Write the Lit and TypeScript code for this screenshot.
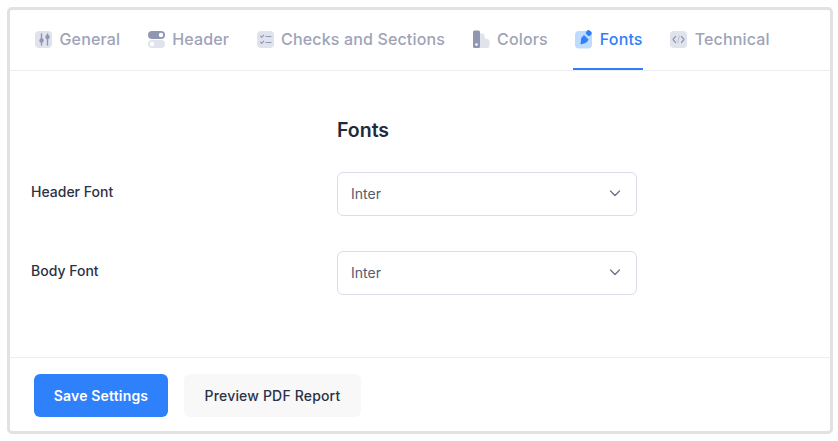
import { LitElement, html, css, svg } from "lit";
import { customElement } from "lit/decorators.js";

const G = "#9097b3";
const L = "#e1e3ec";
const icons: Record<string, unknown> = {
  general: svg`<rect x="2" y="2" width="17" height="17" rx="4" fill="${L}"/>
    <path d="M8.5 5v11M14.5 5v11" stroke="${G}" stroke-width="1.4" stroke-linecap="round"/>
    <circle cx="8.5" cy="11.5" r="2.2" fill="${G}"/><circle cx="14.5" cy="8" r="2.2" fill="${G}"/>`,
  header: svg`<rect x="2" y="2" width="17" height="8" rx="4" fill="${G}"/><circle cx="15" cy="6" r="2.2" fill="#fff"/>
    <rect x="2" y="11" width="17" height="8" rx="4" fill="${L}"/><circle cx="6" cy="15" r="2.2" fill="#fff"/>`,
  checks: svg`<rect x="2" y="2" width="17" height="17" rx="4" fill="${L}"/>
    <path d="M5.5 7.2l1.2 1.2 2-2.2M5.5 13.2l1.2 1.2 2-2.2M11 7.5h5M11 13.5h5" stroke="${G}" stroke-width="1.2" fill="none" stroke-linecap="round" stroke-linejoin="round"/>`,
  colors: svg`<path d="M8 4.5h3.5a2 2 0 0 1 2 2v1a2.5 2.5 0 0 0 2.5 2.5a2.5 2.5 0 0 1 2.5 2.5v4a2.5 2.5 0 0 1-2.5 2.5H8z" fill="${L}"/>
    <rect x="2" y="1.5" width="7" height="17.5" rx="1.5" fill="${G}"/><circle cx="5.5" cy="15.5" r="1.3" fill="#fff"/>`,
  fonts: svg`<rect x="2" y="2" width="17" height="17.5" rx="4" fill="#bfdbfe"/>
    <path d="M11 6.5L15 10.5L13.5 13L8 15L8.8 9z" fill="#2f80fb" stroke="#2f80fb" stroke-width="1" stroke-linejoin="round"/>
    <rect x="13" y="1.5" width="5.6" height="5" rx="1.8" transform="rotate(42 15.8 4)" fill="#2f80fb"/>`,
  technical: svg`<rect x="2" y="2" width="17" height="17" rx="4" fill="${L}"/>
    <path d="M7.5 7.5l-2.5 3 2.5 3M13.5 7.5l2.5 3-2.5 3" stroke="${G}" stroke-width="1.2" fill="none" stroke-linecap="round" stroke-linejoin="round"/>
    <path d="M11.4 7l-1.8 7" stroke="#c3c7d6" stroke-width="1.1" stroke-linecap="round"/>`,
};

const tabs = [
  ["general", "General"],
  ["header", "Header"],
  ["checks", "Checks and Sections"],
  ["colors", "Colors"],
  ["fonts", "Fonts"],
  ["technical", "Technical"],
];

@customElement("app-root")
export class AppRoot extends LitElement {
  static styles = css`
    :host {
      display: block;
      padding: 7px 5px 7px 7px;
      background: #fff;
      font-family: Inter, "Liberation Sans", sans-serif;
    }
    .card {
      height: 427px;
      box-sizing: border-box;
      border: 3px solid #e2e2e2;
      border-radius: 5px;
      background: #fff;
      display: flex;
      flex-direction: column;
    }
    .tabs {
      display: flex;
      gap: 25.5px;
      height: 61px;
      box-sizing: border-box;
      padding-left: 23px;
      border-bottom: 1px solid #ececf1;
    }
    .tab {
      display: flex;
      align-items: center;
      gap: 6.5px;
      height: 60px;
      box-sizing: border-box;
      font-size: 16px;
      letter-spacing: 0.15px;
      font-weight: 500;
      color: #9ea3b8;
      border-bottom: 2px solid transparent;
    }
    .tab.active {
      color: #2f80fb;
      border-bottom-color: #2f80fb;
    }
    .tab svg {
      width: 20px;
      height: 21px;
      flex: none;
      overflow: visible;
    }
    .main {
      flex: 1;
      padding: 46px 21px 0;
    }
    .grid {
      display: grid;
      grid-template-columns: 306px 300px;
      row-gap: 35px;
    }
    h2 {
      grid-column: 2;
      margin: 0 0 -6px;
      font-size: 19.5px;
      line-height: 26px;
      font-weight: 600;
      color: #1f2a3d;
    }
    label {
      font-size: 14px;
      font-weight: 500;
      color: #2b3245;
      line-height: 40px;
    }
    .select {
      height: 44px;
      box-sizing: border-box;
      border: 1px solid #d9dde8;
      border-radius: 6px;
      display: flex;
      align-items: center;
      justify-content: space-between;
      padding: 0 14px 2px 13px;
      font-size: 14px;
      color: #545b70;
    }
    .select svg {
      width: 14px;
      height: 14px;
    }
    .footer {
      height: 74px;
      box-sizing: border-box;
      border-top: 1px solid #ececf1;
      padding: 16px 24px 0;
      display: flex;
      gap: 16px;
      align-items: flex-start;
    }
    button {
      height: 43px;
      border: none;
      border-radius: 6px;
      font-family: inherit;
      font-size: 14px;
      letter-spacing: 0.17px;
      padding: 0;
    }
    .primary {
      width: 134px;
      background: #2f80fb;
      color: #fff;
      font-weight: 600;
    }
    .secondary {
      width: 177px;
      background: #f8f8f8;
      color: #2b3245;
      font-weight: 500;
    }
  `;

  private select() {
    return html`<div class="select">
      <span>Inter</span>
      <svg viewBox="0 0 14 14" fill="none" stroke="#6b7287" stroke-width="1.3" stroke-linecap="round" stroke-linejoin="round"><path d="M2.5 5l4.5 4.5L11.5 5"/></svg>
    </div>`;
  }

  render() {
    return html`<div class="card">
      <nav class="tabs">
        ${tabs.map(
          ([k, t]) => html`<div class="tab ${k === "fonts" ? "active" : ""}">
            <svg viewBox="0 0 20 21">${icons[k]}</svg><span>${t}</span>
          </div>`
        )}
      </nav>
      <section class="main">
        <div class="grid">
          <h2>Fonts</h2>
          <label>Header Font</label>${this.select()}
          <label>Body Font</label>${this.select()}
        </div>
      </section>
      <footer class="footer">
        <button class="primary">Save Settings</button>
        <button class="secondary">Preview PDF Report</button>
      </footer>
    </div>`;
  }
}
